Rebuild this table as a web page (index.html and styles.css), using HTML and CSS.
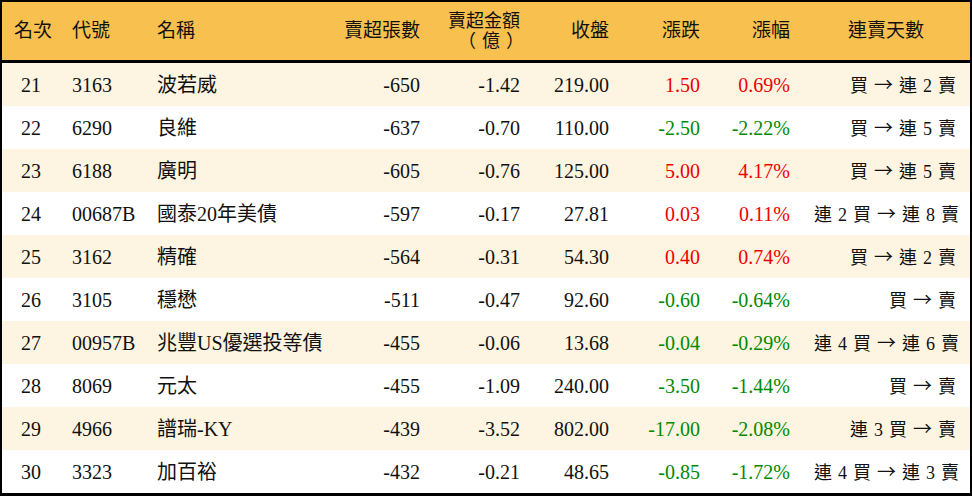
FILE: index.html
```html
<!DOCTYPE html>
<html lang="zh-Hant">
<head>
<meta charset="utf-8">
<title>賣超排行</title>
<link rel="stylesheet" href="styles.css">
</head>
<body>
<table class="rank">
  <colgroup>
    <col class="c-rank"><col class="c-code"><col class="c-name"><col class="c-vol"><col class="c-amt"><col class="c-close"><col class="c-chg"><col class="c-pct"><col class="c-days">
  </colgroup>
  <thead>
    <tr>
      <th class="center">名次</th>
      <th class="left">代號</th>
      <th class="left">名稱</th>
      <th class="right">賣超張數</th>
      <th class="right amt"><span class="line">賣超金額</span><span class="line paren">（億）</span></th>
      <th class="right">收盤</th>
      <th class="right">漲跌</th>
      <th class="right">漲幅</th>
      <th class="center">連賣天數</th>
    </tr>
  </thead>
  <tbody>
    <tr><td class="center">21</td><td>3163</td><td>波若威</td><td class="right">-650</td><td class="right">-1.42</td><td class="right">219.00</td><td class="right up">1.50</td><td class="right up">0.69%</td><td class="right days">買 <span class="arrow">→</span> 連 2 賣</td></tr>
    <tr><td class="center">22</td><td>6290</td><td>良維</td><td class="right">-637</td><td class="right">-0.70</td><td class="right">110.00</td><td class="right down">-2.50</td><td class="right down">-2.22%</td><td class="right days">買 <span class="arrow">→</span> 連 5 賣</td></tr>
    <tr><td class="center">23</td><td>6188</td><td>廣明</td><td class="right">-605</td><td class="right">-0.76</td><td class="right">125.00</td><td class="right up">5.00</td><td class="right up">4.17%</td><td class="right days">買 <span class="arrow">→</span> 連 5 賣</td></tr>
    <tr><td class="center">24</td><td>00687B</td><td>國泰20年美債</td><td class="right">-597</td><td class="right">-0.17</td><td class="right">27.81</td><td class="right up">0.03</td><td class="right up">0.11%</td><td class="right days">連 2 買 <span class="arrow">→</span> 連 8 賣</td></tr>
    <tr><td class="center">25</td><td>3162</td><td>精確</td><td class="right">-564</td><td class="right">-0.31</td><td class="right">54.30</td><td class="right up">0.40</td><td class="right up">0.74%</td><td class="right days">買 <span class="arrow">→</span> 連 2 賣</td></tr>
    <tr><td class="center">26</td><td>3105</td><td>穩懋</td><td class="right">-511</td><td class="right">-0.47</td><td class="right">92.60</td><td class="right down">-0.60</td><td class="right down">-0.64%</td><td class="right days">買 <span class="arrow">→</span> 賣</td></tr>
    <tr><td class="center">27</td><td>00957B</td><td>兆豐US優選投等債</td><td class="right">-455</td><td class="right">-0.06</td><td class="right">13.68</td><td class="right down">-0.04</td><td class="right down">-0.29%</td><td class="right days">連 4 買 <span class="arrow">→</span> 連 6 賣</td></tr>
    <tr><td class="center">28</td><td>8069</td><td>元太</td><td class="right">-455</td><td class="right">-1.09</td><td class="right">240.00</td><td class="right down">-3.50</td><td class="right down">-1.44%</td><td class="right days">買 <span class="arrow">→</span> 賣</td></tr>
    <tr><td class="center">29</td><td>4966</td><td>譜瑞-KY</td><td class="right">-439</td><td class="right">-3.52</td><td class="right">802.00</td><td class="right down">-17.00</td><td class="right down">-2.08%</td><td class="right days">連 3 買 <span class="arrow">→</span> 賣</td></tr>
    <tr><td class="center">30</td><td>3323</td><td>加百裕</td><td class="right">-432</td><td class="right">-0.21</td><td class="right">48.65</td><td class="right down">-0.85</td><td class="right down">-1.72%</td><td class="right days">連 4 買 <span class="arrow">→</span> 連 3 賣</td></tr>
  </tbody>
</table>
</body>
</html>
```
FILE: styles.css
```css
html, body {
  margin: 0;
  padding: 0;
  background: #ffffff;
}

.rank {
  width: 972px;
  table-layout: fixed;
  border-collapse: separate;
  border-spacing: 0;
  border: 2px solid #000;
  border-bottom-width: 3px;
  font-family: "Liberation Serif", "Noto Sans CJK TC", serif;
  font-size: 20px;
  color: #111;
}

.c-rank { width: 58px; }
.c-code { width: 85px; }
.c-name { width: 187px; }
.c-vol { width: 100px; }
.c-amt { width: 100px; }
.c-close { width: 89px; }
.c-chg { width: 91px; }
.c-pct { width: 90px; }
.c-days { width: 168px; }

.rank th {
  background: #f8c04e;
  height: 58px;
  padding: 0 12px;
  font-weight: normal;
  font-size: 19px;
  line-height: 20px;
  border-bottom: 3px solid #000;
  white-space: nowrap;
  vertical-align: middle;
}

.rank th .line {
  display: block;
  font-size: 18px;
  line-height: 20px;
}

.rank th .paren {
  text-align: center;
  letter-spacing: 6px;
  padding-left: 14px;
}

.rank td {
  height: 43px;
  padding: 0 12px;
  line-height: 20px;
  white-space: nowrap;
  vertical-align: middle;
  text-align: left;
}

.rank tbody tr:nth-child(odd) td {
  background: #fdf5e1;
}

.rank .left { text-align: left; }
.rank .right { text-align: right; }
.rank .center { text-align: center; }

.rank td.days {
  padding-right: 14px;
  font-size: 18px;
  word-spacing: 1.5px;
}

.arrow {
  font-family: "Noto Sans CJK TC", sans-serif;
  font-size: 19px;
}

.up { color: #f00000; }
.down { color: #008a00; }
```
